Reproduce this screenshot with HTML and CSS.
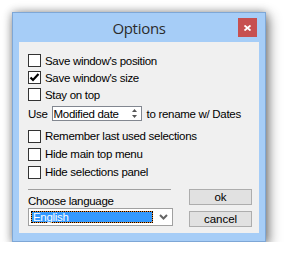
FILE: index.html
```html
<!DOCTYPE html>
<html lang="en">
<head>
    <meta charset="UTF-8">
    <title>Options</title>
    <link rel="stylesheet" href="styles.css">
</head>
<body>
    <div class="window">
        <div class="titlebar">
            <span class="title">Options</span>
            <span class="close">
                <svg width="7" height="6" viewBox="0 0 7 6"><path d="M0.5 0.5L6.5 5.5M6.5 0.5L0.5 5.5" stroke="#fff" stroke-width="1.8"/></svg>
            </span>
        </div>
        <div class="client">
            <ul class="opts">
                <li><span class="box"></span>Save window's position</li>
                <li><span class="box"><svg width="11" height="11" viewBox="0 0 11 11"><path d="M1.5 5.5L4 8L9.5 2" fill="none" stroke="#000" stroke-width="2.2"/></svg></span>Save window's size</li>
                <li><span class="box"></span>Stay on top</li>
                <li class="use">
                    Use
                    <span class="spin">Modified date
                        <svg width="7" height="13" viewBox="0 0 7 13"><path d="M3.5 2L6 5H1Z" fill="#555"/><path d="M1 8H6L3.5 11Z" fill="#555"/></svg>
                    </span>
                    to rename w/ Dates
                </li>
                <li class="gap"><span class="box"></span>Remember last used selections</li>
                <li class="tall"><span class="box"></span>Hide main top menu</li>
                <li class="tall"><span class="box"></span>Hide selections panel</li>
            </ul>
            <div class="bottom">
                <div class="lang">
                    <div class="sep"></div>
                    <div class="label">Choose language</div>
                    <div class="combo">
                        <span class="sel">English</span>
                        <svg width="9" height="6" viewBox="0 0 9 6"><path d="M1 1L4.5 4.5L8 1" fill="none" stroke="#666" stroke-width="2"/></svg>
                    </div>
                </div>
                <div class="buttons">
                    <button>ok</button>
                    <button>cancel</button>
                </div>
            </div>
        </div>
    </div>
</body>
</html>
```
FILE: styles.css
```css
*{
    margin: 0;
    padding: 0;
    box-sizing: border-box;
}
body{
    background: #fff;
    font-family: "Liberation Sans", Arial, sans-serif;
    font-size: 11.5px;
    letter-spacing: -0.3px;
    color: #000;
}
.window{
    width: 254px;
    height: 230px;
    margin: 12px 0 0 12px;
    background: #a6cdf7;
    border: 1px solid #7ea7d6;
    box-shadow: 0 0 8px rgba(0,0,0,0.3), 3px 4px 12px rgba(0,0,0,0.45);
}
.titlebar{
    height: 29px;
    display: grid;
    grid-template-columns: 1fr auto 1fr;
    align-items: center;
}
.title{
    grid-column: 2;
    font-family: "Open Sans", sans-serif;
    font-size: 15px;
    letter-spacing: -0.3px;
    color: #2b2b2b;
}
.close{
    grid-column: 3;
    justify-self: end;
    align-self: start;
    margin: 5px 8px 0 0;
    width: 19px;
    height: 19px;
    background: #c75050;
    display: flex;
    align-items: center;
    justify-content: center;
}
.client{
    height: 191px;
    margin: 0 6px;
    background: #f0f0f0;
    padding: 10px 6px 6px 9px;
    display: flex;
    flex-direction: column;
}
.opts{
    list-style: none;
}
.opts li{
    height: 17px;
    display: flex;
    align-items: center;
    white-space: nowrap;
}
.opts li.tall{
    height: 18px;
}
.opts li.gap{
    height: 18px;
    margin-top: 5px;
}
.box{
    width: 13px;
    height: 13px;
    border: 1px solid #333;
    background: #fff;
    margin-right: 4px;
    display: flex;
    align-items: center;
    justify-content: center;
}
.use{
    margin-top: 2px;
}
.spin{
    width: 90px;
    height: 15px;
    margin: 0 5px 0 4px;
    border: 1px solid #828790;
    background: #fff;
    padding-left: 1px;
    display: flex;
    align-items: center;
    justify-content: space-between;
}
.spin svg{
    margin-right: 3px;
}
.bottom{
    margin-top: auto;
    display: flex;
    gap: 16px;
}
.lang{
    width: 145px;
}
.sep{
    width: 143px;
    height: 1px;
    background: #a0a0a0;
}
.label{
    margin-top: 5px;
    height: 13px;
    line-height: 13px;
}
.combo{
    height: 18px;
    border: 1px solid #a0a0a0;
    background: #fff;
    padding: 2px 4px 2px 2px;
    display: flex;
    align-items: center;
    justify-content: space-between;
}
.sel{
    width: 122px;
    height: 12px;
    line-height: 10px;
    padding-left: 1px;
    color: #fff;
    border: 1px dotted #000;
    background: linear-gradient(#3399ff, #3399ff) padding-box, #f08c2e border-box;
}
.buttons{
    width: 63px;
    display: flex;
    flex-direction: column;
    gap: 6px;
}
.buttons button{
    height: 16px;
    border: 1px solid #adadad;
    background: #e1e1e1;
    font: inherit;
    color: #000;
    line-height: 13px;
}
```
